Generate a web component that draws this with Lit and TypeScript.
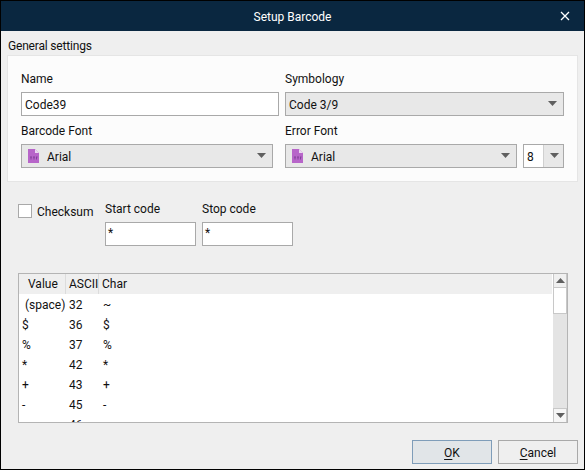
import { LitElement, html, css } from "lit";
import { customElement } from "lit/decorators.js";

const caret = (cls = "caret") => html`<svg class=${cls} width="9" height="5" viewBox="0 0 9 5"><path d="M0 0H9L4.5 5Z" fill="#5f5f5f"/></svg>`;
const fileIcon = html`<svg class="ficon" width="11" height="14" viewBox="0 0 11 14">
  <path d="M0 0H7L11 4V14H0Z" fill="#b765c9"/>
  <path d="M7 0L11 4H7Z" fill="#ecd9f1"/>
  <path d="M2 8H4M5 8H7M8 8H9.500M3 8V10.500M6 8V10.500M8.500 8V10.500" stroke="#83409a" stroke-width="1" fill="none"/>
</svg>`;
const rows = [
  ["(space)", "32", "~", true],
  ["$", "36", "$"],
  ["%", "37", "%"],
  ["*", "42", "*"],
  ["+", "43", "+"],
  ["-", "45", "-"],
  [".", "46", "."],
];

@customElement("app-root")
export class AppRoot extends LitElement {
  static styles = css`
    :host {
      display: block; width: 585px; height: 470px; box-sizing: border-box;
      border: 1px solid #000; background: #efefef; color: #111;
      font: 12px/16px Roboto, sans-serif; overflow: hidden;
    }
    .title { height: 30px; background: #0a2740; color: #fff; display: flex; align-items: center; justify-content: center; position: relative; }
    .close { position: absolute; right: 14px; top: 10px; }
    .legend { margin: 7px 0 0 7px; height: 17px; line-height: 16px; letter-spacing: -0.18px; }
    .t { margin-top: 2px; }
    .panel {
      margin-left: 6px; width: 571px; height: 127px; box-sizing: border-box;
      background: #fcfcfc; border: 1px solid #e5e5e5; padding: 15px 13px 0;
      display: grid; grid-template-columns: 258px 279px; column-gap: 6px; row-gap: 0;
      grid-template-rows: 52px 52px;
    }
    .field { display: flex; flex-direction: column; gap: 5px; }
    .lbl { height: 16px; line-height: 16px; }
    .box {
      height: 24px; box-sizing: border-box; border: 1px solid #a9a9a9; background: #e8e8e8;
      display: flex; align-items: center; padding: 0 3px; position: relative;
    }
    .box.white { background: #fff; }
    .caret { margin-left: auto; margin-right: 3px; margin-top: -2px; flex: none; }
    .ficon { margin: 0 8px 0 3px; flex: none; }
    .narrow { width: 252px; }
    .errline { display: flex; gap: 6px; }
    .errline .box:first-child { width: 232px; }
    .spin { width: 41px; padding: 0; }
    .spin .num { width: 20px; height: 100%; background: #fff; display: flex; align-items: center; padding-left: 3px; box-sizing: border-box; border-right: 1px solid #d0d0d0; }
    .spin .caret { margin-right: 4px; }
    .options { display: flex; margin: 21px 0 0 17px; height: 43px; }
    .check { display: flex; margin-top: 1px; width: 87px; }
    .cb { width: 14px; height: 14px; box-sizing: border-box; border: 1px solid #a9a9a9; background: #fff; margin-right: 5px; }
    .code { width: 91px; margin-right: 6px; margin-top: -2px; display: flex; flex-direction: column; gap: 5px; }
    .code .box { padding: 2px 2px 0; background: #fff; align-items: flex-start; }
    .table {
      margin: 27px 0 0 17px; width: 550px; height: 150px; box-sizing: border-box;
      border: 1px solid #b4b4b4; background: #fff; display: flex; overflow: hidden;
    }
    .grid { flex: 1; min-width: 0; overflow: hidden; }
    .row { display: grid; grid-template-columns: 47px 33px 1fr; height: 20px; align-items: center; }
    .head { background: #efefef; }
    .head span { height: 100%; display: flex; align-items: center; border-right: 1px solid #dcdcdc; box-sizing: border-box; }
    .head span:last-child { border: none; padding-left: 3px; }
    .head .v { padding-left: 9px; }
    .head .a { padding-left: 3px; }
    .cell0, .cell1, .cell2 { margin-top: 2px; }
    .cell0 { padding-left: 3px; }
    .cell0.in { padding-left: 6px; }
    .cell1 { padding-left: 3px; }
    .cell2 { padding-left: 4px; }
    .sb { width: 15px; flex: none; background: #e4e4e4; display: flex; flex-direction: column; border-left: 1px solid #fff; box-sizing: border-box; }
    .sb .btn { height: 14px; background: #f0f0f0; display: flex; align-items: center; justify-content: center; flex: none; border: 1px solid #c8c8c8; border-top: none; box-sizing: border-box; }
    .sb .btn.bot { border: 1px solid #c8c8c8; border-bottom: none; margin-top: auto; background: #f6f6f6; }
    .sb .thumb { height: 26px; background: #fff; border: 1px solid #c8c8c8; border-top: none; box-sizing: border-box; }
    .actions { display: flex; justify-content: flex-end; gap: 6px; margin: 17px 6px 0 0; }
    .btnx {
      width: 80px; height: 24px; box-sizing: border-box; border: 1px solid #a9a9a9; background: #efefef;
      display: flex; align-items: center; justify-content: center;
    }
    .btnx.def { border-color: #7f9db9; background: #e1e5e8; }
    u { text-underline-offset: 2px; }
  `;

  render() {
    return html`
      <div class="title"><span class="t">Setup Barcode</span>
        <svg class="close" width="10" height="10" viewBox="0 0 10 10"><path d="M1 1L9 9M9 1L1 9" stroke="#fff" stroke-width="1.3"/></svg>
      </div>
      <div class="legend">General settings</div>
      <div class="panel">
        <div class="field"><div class="lbl">Name</div><div class="box white"><span class="t">Code39</span></div></div>
        <div class="field"><div class="lbl">Symbology</div><div class="box"><span class="t">Code 3/9</span>${caret()}</div></div>
        <div class="field"><div class="lbl">Barcode Font</div><div class="box narrow">${fileIcon}<span class="t">Arial</span>${caret()}</div></div>
        <div class="field"><div class="lbl">Error Font</div>
          <div class="errline">
            <div class="box">${fileIcon}<span class="t">Arial</span>${caret()}</div>
            <div class="box spin"><div class="num"><span class="t">8</span></div>${caret()}</div>
          </div>
        </div>
      </div>
      <div class="options">
        <div class="check"><div class="cb"></div><span>Checksum</span></div>
        <div class="code"><div class="lbl">Start code</div><div class="box">*</div></div>
        <div class="code"><div class="lbl">Stop code</div><div class="box">*</div></div>
      </div>
      <div class="table">
        <div class="grid">
          <div class="row head"><span class="v">Value</span><span class="a">ASCII</span><span>Char</span></div>
          ${rows.map(r => html`<div class="row"><div class="cell0 ${r[3] ? "in" : ""}">${r[0]}</div><div class="cell1">${r[1]}</div><div class="cell2">${r[2]}</div></div>`)}
        </div>
        <div class="sb">
          <div class="btn"><svg width="9" height="5" viewBox="0 0 9 5"><path d="M0 5H9L4.5 0Z" fill="#5f5f5f"/></svg></div>
          <div class="thumb"></div>
          <div class="btn bot">${caret("")}</div>
        </div>
      </div>
      <div class="actions">
        <div class="btnx def"><span class="t"><u>O</u>K</span></div>
        <div class="btnx"><span class="t"><u>C</u>ancel</span></div>
      </div>
    `;
  }
}
